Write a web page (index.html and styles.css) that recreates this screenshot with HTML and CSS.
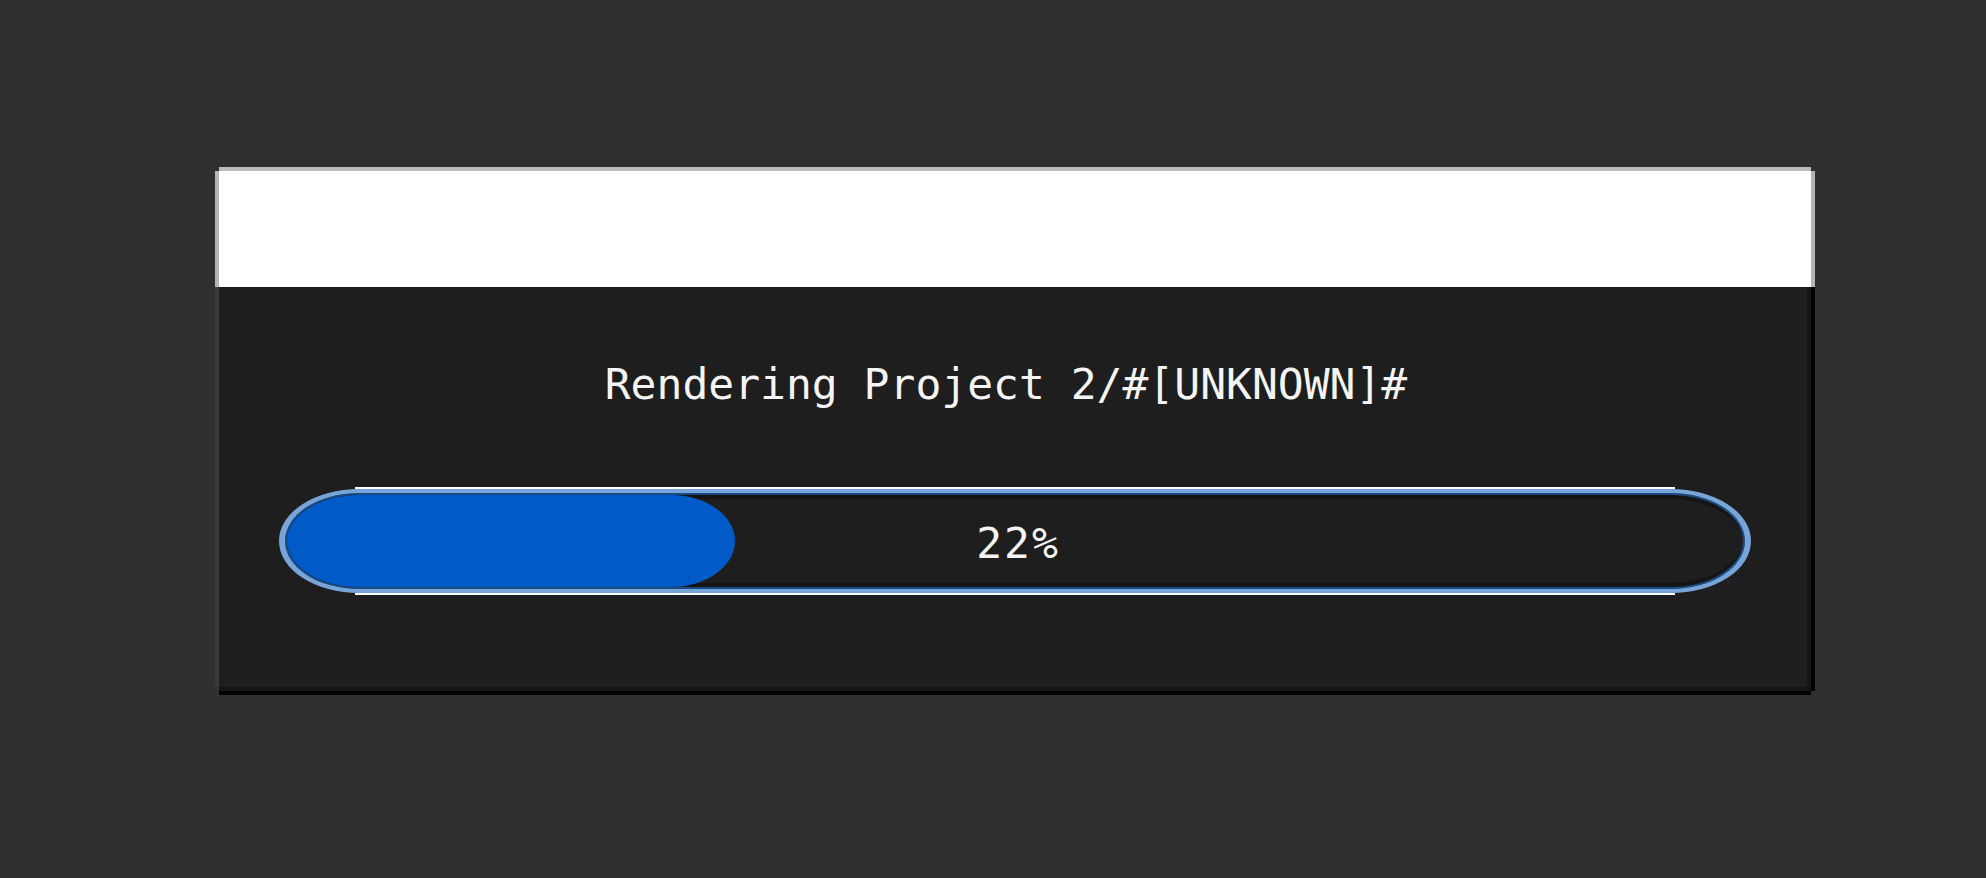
FILE: index.html
```html
<!DOCTYPE html>
<html>
<head>
<meta charset="utf-8">
<link rel="stylesheet" href="styles.css">
</head>
<body>
<div class="dialog">
  <div class="titlebar"></div>
  <div class="content">
    <div class="message">Rendering Project 2/#[UNKNOWN]#</div>
    <div class="frame">
      <div class="bar">
        <div class="fill" style="width:448px"></div>
        <div class="label">22%</div>
      </div>
    </div>
  </div>
</div>
</body>
</html>
```
FILE: styles.css
```css
html, body {
  margin: 0;
  padding: 0;
  background: #303030;
}
body {
  width: 1986px;
  height: 878px;
  overflow: hidden;
  font-family: "DejaVu Sans Mono", "Liberation Mono", monospace;
}
.dialog {
  padding: 171px 0 0 219px;
}
.titlebar {
  position: relative;
  z-index: 1;
  width: 1592px;
  height: 116px;
  background: #ffffff;
  box-shadow: 0 -4px 0 #bbbbbb, -4px 0 0 #b5b5b5, 4px 0 0 #b5b5b5;
}
.content {
  width: 1592px;
  height: 404px;
  box-sizing: border-box;
  padding: 76px 60px 96px;
  background: #1e1e1e;
  box-shadow: inset -4px -4px 0 #151515, 4px 0 0 #000000, 0 4px 0 #000000, -4px -4px 0 #3a3a3a;
}
.message {
  color: #f4f4f4;
  font-size: 43px;
  line-height: 43px;
  text-align: center;
  padding-right: 18px;
  white-space: nowrap;
}
.frame {
  margin: 81px 76px 0;
  border-top: 2px solid #ffffff;
  border-bottom: 2px solid #ffffff;
}
.bar {
  margin: 0 -76px;
  height: 104px;
  box-sizing: border-box;
  border-style: solid;
  border-color: #78a5d9;
  border-width: 4px 6px;
  border-radius: 80px / 52px;
  padding: 2px;
  background: #1e1e1e;
  box-shadow: inset 0 0 0 2px #1a4a82, inset 0 6px 0 #141414, inset 0 -6px 0 #141414;
  display: grid;
}
.fill {
  grid-area: 1 / 1;
  justify-self: start;
  height: 92px;
  background: #005bc8;
  border-radius: 72px 64px 64px 72px / 46px;
}
.label {
  grid-area: 1 / 1;
  justify-self: center;
  align-self: center;
  color: #f4f4f4;
  font-size: 43px;
  line-height: 43px;
  letter-spacing: 2px;
  padding: 4px 0 0 6px;
}
```
